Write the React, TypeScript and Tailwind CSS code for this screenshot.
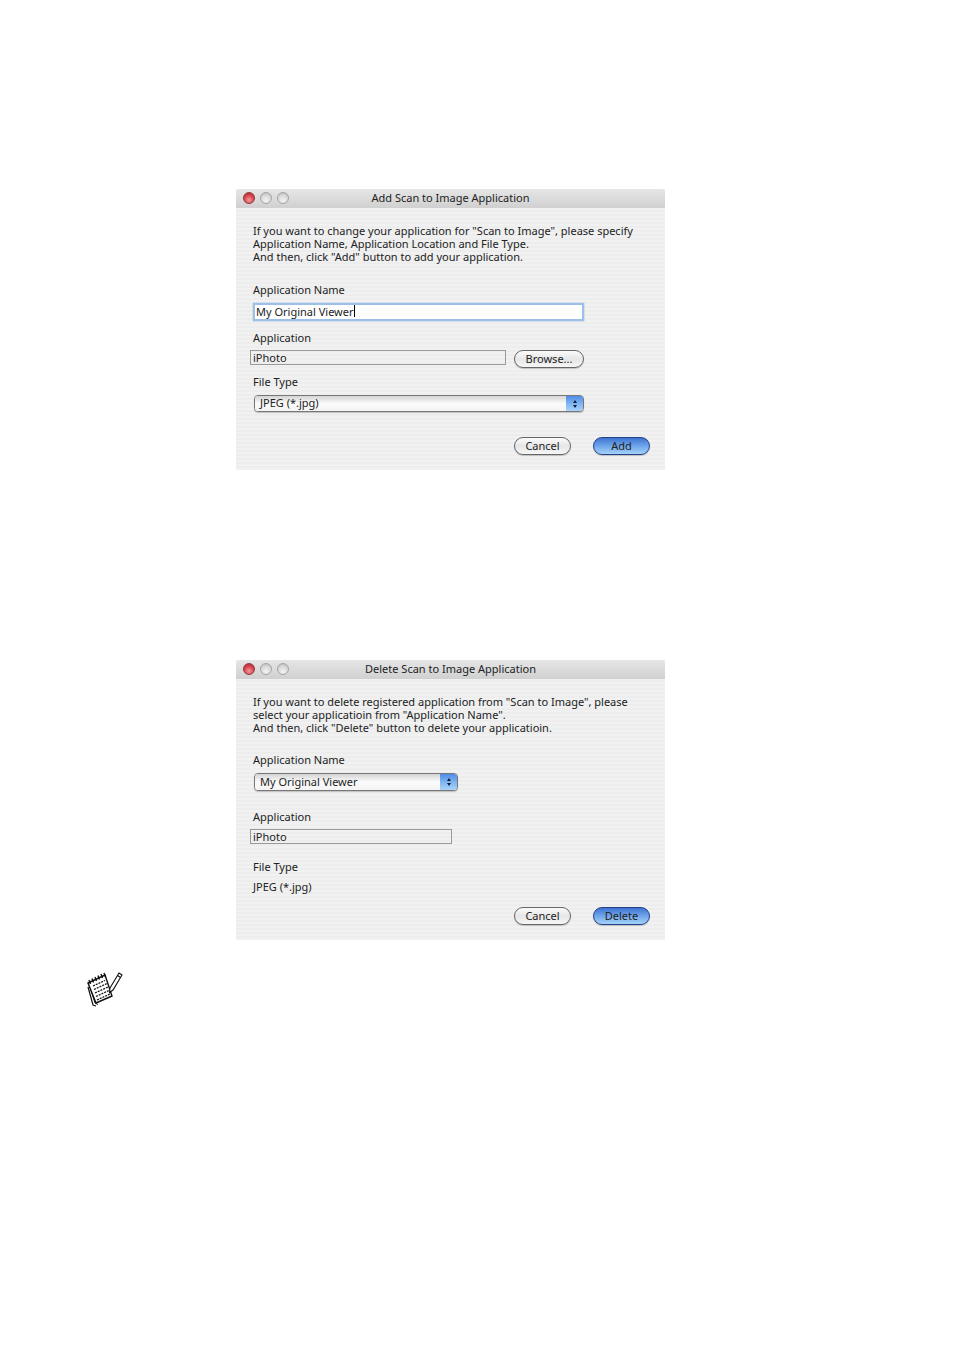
import React from "react";

function Lights() {
  return (
    <div className="flex items-center gap-[5px]">
      <span className="block h-3 w-3 rounded-full border border-[#8e3a3e] bg-[radial-gradient(circle_at_50%_70%,#f59a9a_0%,#d8434b_55%,#a8262e_100%)]" />
      <span className="block h-3 w-3 rounded-full border border-[#a5a5a5] bg-[radial-gradient(circle_at_50%_75%,#f4f4f4_0%,#d6d6d6_60%,#b5b5b5_100%)]" />
      <span className="block h-3 w-3 rounded-full border border-[#a5a5a5] bg-[radial-gradient(circle_at_50%_75%,#f4f4f4_0%,#d6d6d6_60%,#b5b5b5_100%)]" />
    </div>
  );
}

function TitleBar({ title }: { title: string }) {
  return (
    <div className="relative flex h-[19px] items-center justify-center rounded-t-[4px] bg-gradient-to-b from-[#e6e6e6] to-[#d0d0d0] pb-[2px] text-[#222]">
      <div className="absolute left-[7px] top-[3px]">
        <Lights />
      </div>
      {title}
    </div>
  );
}

function Button({ label, primary, width }: { label: string; primary?: boolean; width: string }) {
  return (
    <div
      className={`flex h-[18px] items-center justify-center rounded-full border pb-[2px] text-[#222] shadow-[0_1px_1px_rgba(0,0,0,0.2)] ${width} ${
        primary
          ? "border-[#23408a] bg-gradient-to-b from-[#3f74d0] via-[#6fa5ea] to-[#a5d2f8]"
          : "border-[#666] bg-gradient-to-b from-[#fbfbfb] via-[#e6e6e6] to-[#f6f6f6]"
      }`}
    >
      {label}
    </div>
  );
}

function Select({ label, className }: { label: string; className: string }) {
  return (
    <div className={`flex overflow-hidden rounded-[4px] border border-[#777] shadow-[0_1px_1px_rgba(0,0,0,0.2)] ${className}`}>
      <div className="flex flex-1 items-center bg-gradient-to-b from-[#d4d4d4] via-[#fbfbfb] to-[#f4f4f4] pb-[2px] pl-[5px] text-[#222]">
        {label}
      </div>
      <div className="flex w-[17px] flex-col items-center justify-center gap-[2px] bg-gradient-to-b from-[#4d8be6] via-[#7fb4f0] to-[#a9d4fa]">
        <span className="block h-0 w-0 border-x-[2.5px] border-b-[3px] border-x-transparent border-b-[#10203c]" />
        <span className="block h-0 w-0 border-x-[2.5px] border-t-[3px] border-x-transparent border-t-[#10203c]" />
      </div>
    </div>
  );
}

function ReadOnlyField({ value, width }: { value: string; width: string }) {
  return <div className={`flex h-[15px] items-center border border-[#999] pl-[2px] text-[#222] ${width}`}>{value}</div>;
}

function Dialog({ title, children }: { title: string; children: React.ReactNode }) {
  return (
    <div className="w-[429px] bg-[repeating-linear-gradient(0deg,#f1f1f1_0px,#f1f1f1_2px,#ededed_2px,#ededed_4px)] text-[11px] leading-[13px] text-[#222]">
      <TitleBar title={title} />
      {children}
    </div>
  );
}

function NoteIcon() {
  return (
    <svg width="38" height="38" viewBox="0 0 38 38" fill="none" stroke="#111" strokeWidth="1.1" className="ml-[85px] mt-[30px] block">
      <path d="M3 17 L8 35 L11 36" strokeWidth="1.2" />
      <path d="M5 17 L10 33 L13 34.5" strokeWidth="1" />
      <path d="M3 13 L20 5 L27 26 L11 33 Z" fill="#fff" strokeWidth="1.4" />
      <path d="M4 10 L5.5 14 M7 8.5 L8.5 12.5 M10 7 L11.5 11 M13 5.5 L14.5 9.5 M16 4 L17.5 8 M19 3 L20.5 7" strokeWidth="1.4" />
      <path d="M8 16 L20 10.5 M9 19.5 L22 13.5 M10 23 L23 17 M11 26.5 L24 20.5 M12 30 L25 24" strokeWidth="1.3" strokeDasharray="2 1" />
      <path d="M25 18 L34 3 L37 5 L28 20 L24.5 22.5 Z" fill="#fff" />
      <path d="M32.5 5.5 L35.5 7.5" />
    </svg>
  );
}

export default function App() {
  return (
    <div className="min-h-[1351px] bg-white pt-[189px] font-['Noto_Sans',sans-serif]">
      <div className="ml-[236px] flex w-[429px] flex-col gap-[190px]">
        <Dialog title="Add Scan to Image Application">
          <div className="h-[262px] pl-[17px] pr-[15px] pt-[16px]">
            <p>If you want to change your application for "Scan to Image", please specify</p>
            <p>Application Name, Application Location and File Type.</p>
            <p>And then, click "Add" button to add your application.</p>
            <p className="mt-[20px]">Application Name</p>
            <div className="mt-[7px] flex h-[18px] w-[331px] items-center border-2 border-[#9dc0e8] bg-white pb-[2px] pl-px shadow-[0_0_1px_#5f8fc8]">
              My Original Viewer<span className="block h-[12px] w-px bg-black" />
            </div>
            <p className="mt-[10px]">Application</p>
            <div className="-ml-[3px] mt-[6px] flex items-start gap-[8px]">
              <ReadOnlyField value="iPhoto" width="w-[256px]" />
              <Button label="Browse..." width="w-[70px]" />
            </div>
            <p className="mt-[7px]">File Type</p>
            <div className="ml-px mt-[7px]">
              <Select label="JPEG (*.jpg)" className="h-[17px] w-[330px]" />
            </div>
            <div className="mt-[25px] flex justify-end gap-[22px]">
              <Button label="Cancel" width="w-[57px]" />
              <Button label="Add" primary width="w-[57px]" />
            </div>
          </div>
        </Dialog>
        <Dialog title="Delete Scan to Image Application">
          <div className="h-[261px] pl-[17px] pr-[15px] pt-[16px]">
            <p>If you want to delete registered application from "Scan to Image", please</p>
            <p>select your applicatioin from "Application Name".</p>
            <p>And then, click "Delete" button to delete your applicatioin.</p>
            <p className="mt-[19px]">Application Name</p>
            <div className="ml-px mt-[7px]">
              <Select label="My Original Viewer" className="h-[18px] w-[204px]" />
            </div>
            <p className="mt-[19px]">Application</p>
            <div className="-ml-[3px] mt-[6px]">
              <ReadOnlyField value="iPhoto" width="w-[202px]" />
            </div>
            <p className="mt-[16px]">File Type</p>
            <p className="mt-[7px]">JPEG (*.jpg)</p>
            <div className="mt-[14px] flex justify-end gap-[22px]">
              <Button label="Cancel" width="w-[57px]" />
              <Button label="Delete" primary width="w-[57px]" />
            </div>
          </div>
        </Dialog>
      </div>
      <NoteIcon />
    </div>
  );
}
